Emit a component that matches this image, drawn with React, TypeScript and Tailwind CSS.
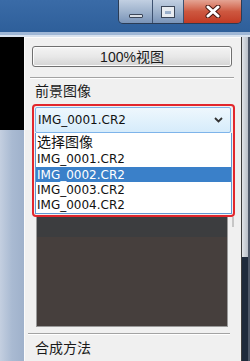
const items = [
  { label: "选择图像", cls: "h-[18px] text-[14px] text-[#111]" },
  { label: "IMG_0001.CR2", cls: "h-[16px] text-[12px] text-[#111] font-['DejaVu_Sans',sans-serif]" },
  { label: "IMG_0002.CR2", cls: "h-[15px] text-[12px] text-white bg-[#3a80c9] font-['DejaVu_Sans',sans-serif]" },
  { label: "IMG_0003.CR2", cls: "h-[15px] text-[12px] text-[#111] font-['DejaVu_Sans',sans-serif]" },
  { label: "IMG_0004.CR2", cls: "h-[16px] text-[12px] text-[#111] font-['DejaVu_Sans',sans-serif]" },
];

function TitleButtons() {
  return (
    <div className="flex h-[24px] rounded-b-[5px] overflow-hidden border border-t-0 border-[#2b3c55]">
      {/* minimize */}
      <div className="w-[34px] flex items-end justify-center pb-[5px] bg-linear-to-b from-[#c2d0e2] via-[#9fb3cd] to-[#7a94b8] border-r border-[#3d5170]">
        <div className="w-[14px] h-[4px] bg-[#d9dee5] border border-[#3b4658] rounded-[1px]" />
      </div>
      {/* maximize */}
      <div className="w-[31px] flex items-center justify-center bg-linear-to-b from-[#c2d0e2] via-[#9fb3cd] to-[#7a94b8] border-r border-[#3d5170]">
        <div className="w-[12px] h-[10px] border-[3px] border-t-[4px] border-[#e8ecf1] outline outline-1 outline-[#3b4658] mt-[1px]" />
      </div>
      {/* close */}
      <div className="w-[57px] flex items-center justify-center bg-linear-to-b from-[#e4a494] via-[#cd5840] to-[#c23a24]">
        <svg width="16" height="13" viewBox="0 0 16 13">
          <path d="M3 2 L13 11 M13 2 L3 11" stroke="#4a1a14" strokeWidth="5" strokeLinecap="round" />
          <path d="M3 2 L13 11 M13 2 L3 11" stroke="#ffffff" strokeWidth="3" strokeLinecap="round" />
        </svg>
      </div>
    </div>
  );
}

export default function App() {
  return (
    <div className="w-[250px] h-[361px] overflow-hidden flex flex-col bg-[#1d2838] font-['Liberation_Sans','Noto_Sans_CJK_SC',sans-serif]">
      {/* title bar */}
      <div className="flex flex-col">
        <div className="h-[32px] flex justify-end pr-[8px] bg-linear-to-b from-[#3a6ba7] to-[#2e5f9a]">
          <TitleButtons />
        </div>
        <div className="h-[3px] bg-[#9fb7d6]" />
        <div className="h-[2px] bg-[#d8e2ee]" />
      </div>

      <div className="flex flex-1">
        {/* left strip */}
        <div className="w-[24px] flex flex-col">
          <div className="h-[93px] bg-black" />
          <div className="flex-1 bg-linear-to-r from-[#c4cfe0] via-[#a9bad2] to-[#9fb1cb]" />
        </div>

        {/* panel */}
        <div className="w-[217px] flex flex-col bg-[#f0f0f0] border-l border-t border-[#fbfbfb]">
          <button className="mt-[8px] ml-[7px] w-[200px] h-[21px] rounded-[3px] border border-[#707070] bg-linear-to-b from-[#f4f4f4] via-[#e8e8e8] to-[#d4d4d4] text-[14px] leading-none text-[#1a1a1a] shadow-[inset_0_0_0_1px_#fcfcfc]">
            100%视图
          </button>

          <div className="mt-[10px] ml-[5px] w-[204px] h-[1px] bg-[#a3a3a3]" />
          <div className="ml-[5px] w-[204px] h-[1px] bg-white" />

          <div className="mt-[4px] ml-[10px] h-[16px] text-[14px] leading-[16px] text-[#1a1a1a]">前景图像</div>

          {/* dropdown (highlighted) */}
          <div className="mt-[5px] ml-[7px] w-[203px] h-[113px] border-2 border-[#e2262c] rounded-[4px] flex flex-col">
            <div className="mt-[1px] ml-[1px] mr-[2px] h-[26px] flex items-center justify-between pl-[2px] pr-[7px] border border-[#7eb4ea] rounded-[2px] bg-linear-to-b from-[#eef7fd] to-[#d6ecfb]">
              <span className="text-[12px] text-[#111] font-['DejaVu_Sans',sans-serif]">IMG_0001.CR2</span>
              <svg width="9" height="6" viewBox="0 0 9 6">
                <path d="M1 1 L4.5 4.5 L8 1" stroke="#333" strokeWidth="1.8" fill="none" />
              </svg>
            </div>
            <div className="ml-[1px] mr-[1px] flex flex-col bg-white border-x border-b border-[#5f97d2]">
              {items.map((it) => (
                <div key={it.label} className={`flex items-center pl-[1px] leading-none ${it.cls}`}>
                  {it.label}
                </div>
              ))}
            </div>
          </div>

          {/* preview area */}
          <div className="ml-[11px] flex items-start">
            <div className="w-[192px] h-[110px] flex flex-col border-x border-b border-[#9a9a9a] bg-[#463f3d]">
              <div className="h-[20px] bg-[#3c3d3f]" />
            </div>
            <div className="ml-[4px] w-[2px] h-[10px] bg-[#c6c6c6]" />
          </div>

          <div className="mt-[6px] ml-[3px] w-[202px] h-[1px] bg-[#a3a3a3]" />
          <div className="ml-[3px] w-[202px] h-[1px] bg-white" />

          <div className="mt-[5px] ml-[10px] h-[16px] text-[14px] leading-[16px] text-[#1a1a1a]">合成方法</div>
        </div>

        {/* right frame */}
        <div className="w-[9px] flex">
          <div className="w-[1px] bg-[#3c3c3c]" />
          <div className="w-[6px] flex flex-col">
            <div className="h-[220px] bg-linear-to-r from-[#e1e4e8] to-[#b9bfc8]" />
            <div className="flex-1 bg-[#1e2a3b]" />
          </div>
          <div className="w-[2px] bg-[#4e5868]" />
        </div>
      </div>
    </div>
  );
}
